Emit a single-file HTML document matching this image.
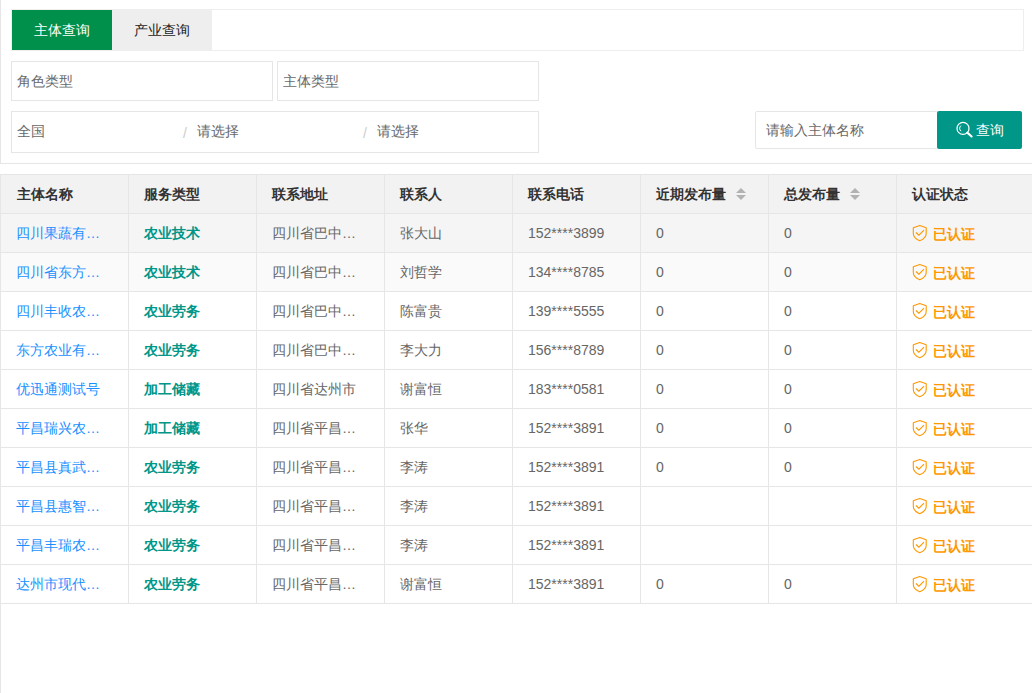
<!DOCTYPE html>
<html><head><meta charset="utf-8">
<style>
*{box-sizing:border-box;margin:0;padding:0}
html,body{width:1032px;height:693px;overflow:hidden;background:#fff}
body{position:relative;font-family:"Liberation Sans",sans-serif;font-size:14px;color:#666}
.abs{position:absolute;white-space:nowrap}
.vl{position:absolute;left:0;top:0;width:1px;height:693px;background:#e6e6e6}
.tabs{position:absolute;left:11px;top:9px;width:1013px;height:42px;border:1px solid #eee}
.tab{position:absolute;top:10px;height:40px;width:100px;line-height:41px;text-align:center;font-size:14px}
.t1{left:12px;background:#00904b;color:#fff}
.t2{left:112px;top:9px;height:42px;line-height:43px;background:#eee;color:#222}
.box{position:absolute;border:1px solid #e6e6e6;background:#fff}
.ph{position:absolute;white-space:nowrap;color:#686868}
.slash{position:absolute;color:#ccc}
.btn{position:absolute;left:937px;top:111px;width:85px;height:38px;background:#009688;border-radius:2px;color:#fff}
.hl{position:absolute;left:0;width:1032px;height:1px;background:#e6e6e6}
.gv{position:absolute;width:1px;background:#e6e6e6}
.th{position:absolute;left:0;width:1032px;height:38px;background:#f2f2f2}
.rowbg{position:absolute;left:0;width:1032px;height:38px}
.cell{position:absolute;width:127px;height:38px;line-height:39px;padding:0 15px;white-space:nowrap;overflow:hidden;text-overflow:ellipsis;color:#666}
.hd{color:#333;font-weight:bold}
.lk{color:#1890ff}
.sv{color:#009688;font-weight:bold}
.ok{color:#ff9800;font-weight:bold;width:200px}
.shield{position:absolute;left:14px;top:10px}
.oktx{position:absolute;left:36px;top:1px}
.sort{position:absolute;width:10px;height:12px}
.sort i{position:absolute;left:0;width:0;height:0;border-left:5px solid transparent;border-right:5px solid transparent}
.sort .up{top:0;border-bottom:5px solid #b2b2b2}
.sort .dn{top:7px;border-top:5px solid #b2b2b2}

</style></head><body>
<div class="tabs"></div>
<div class="tab t1">主体查询</div>
<div class="tab t2">产业查询</div>

<div class="box" style="left:11px;top:61px;width:262px;height:40px"></div>
<div class="ph" style="left:17px;top:73px">角色类型</div>
<div class="box" style="left:277px;top:61px;width:262px;height:40px"></div>
<div class="ph" style="left:283px;top:73px">主体类型</div>

<div class="box" style="left:11px;top:111px;width:528px;height:42px"></div>
<div class="ph" style="left:17px;top:123px">全国</div>
<div class="slash" style="left:183px;top:125px">/</div>
<div class="ph" style="left:197px;top:123px">请选择</div>
<div class="slash" style="left:363px;top:125px">/</div>
<div class="ph" style="left:377px;top:123px">请选择</div>

<div class="box" style="left:755px;top:111px;width:183px;height:38px;border-radius:2px"></div>
<div class="ph" style="left:766px;top:122px">请输入主体名称</div>
<div class="btn"></div>
<svg class="abs" style="left:954px;top:120px" width="20" height="20" viewBox="0 0 20 20"><circle cx="9" cy="8.4" r="6" fill="none" stroke="#fff" stroke-width="1.25"/><path d="M13.3 12.6 L17.6 16.5" stroke="#fff" stroke-width="2.1" stroke-linecap="round"/><path d="M7 5.6 A3.6 3.6 0 0 0 7 11.2" fill="none" stroke="#fff" stroke-width="1"/></svg>
<div class="abs" style="left:976px;top:122px;color:#fff">查询</div>

<div class="hl" style="top:163px"></div>
<div class="hl" style="top:174px"></div>
<div class="th" style="top:175px"></div>
<div class="cell hd" style="left:2px;top:175px">主体名称</div>
<div class="cell hd" style="left:129px;top:175px">服务类型</div>
<div class="cell hd" style="left:257px;top:175px">联系地址</div>
<div class="cell hd" style="left:385px;top:175px">联系人</div>
<div class="cell hd" style="left:513px;top:175px">联系电话</div>
<div class="cell hd" style="left:641px;top:175px">近期发布量</div>
<div class="cell hd" style="left:769px;top:175px">总发布量</div>
<div class="cell hd" style="left:897px;top:175px">认证状态</div>
<div class="sort" style="left:736px;top:188px"><i class="up"></i><i class="dn"></i></div>
<div class="sort" style="left:850px;top:188px"><i class="up"></i><i class="dn"></i></div>
<div class="hl" style="top:213px"></div>
<div class="rowbg" style="top:214px;background:#f5f5f5"></div>
<div class="cell lk" style="left:1px;top:214px">四川果蔬有限公司</div>
<div class="cell sv" style="left:129px;top:214px">农业技术</div>
<div class="cell " style="left:257px;top:214px">四川省巴中市巴州区</div>
<div class="cell " style="left:385px;top:214px">张大山</div>
<div class="cell " style="left:513px;top:214px">152****3899</div>
<div class="cell " style="left:641px;top:214px">0</div>
<div class="cell " style="left:769px;top:214px">0</div>
<div class="cell ok" style="left:897px;top:214px"><svg class="shield" width="18" height="19" viewBox="0 0 18 19"><path d="M8.75 1.4 L15.2 3.7 V9.4 C15.2 12.8 12.6 15 8.75 16.8 C4.9 15 2.3 12.8 2.3 9.4 V3.7 Z" fill="none" stroke="#ff9800" stroke-width="1.1" stroke-linejoin="round"/><path d="M4.9 8.5 L7.9 11.2 L13 6.2" fill="none" stroke="#ff9800" stroke-width="1.1"/></svg><span class="oktx">已认证</span></div>
<div class="hl" style="top:252px"></div>
<div class="rowbg" style="top:253px;background:#fafafa"></div>
<div class="cell lk" style="left:1px;top:253px">四川省东方农业</div>
<div class="cell sv" style="left:129px;top:253px">农业技术</div>
<div class="cell " style="left:257px;top:253px">四川省巴中市巴州区</div>
<div class="cell " style="left:385px;top:253px">刘哲学</div>
<div class="cell " style="left:513px;top:253px">134****8785</div>
<div class="cell " style="left:641px;top:253px">0</div>
<div class="cell " style="left:769px;top:253px">0</div>
<div class="cell ok" style="left:897px;top:253px"><svg class="shield" width="18" height="19" viewBox="0 0 18 19"><path d="M8.75 1.4 L15.2 3.7 V9.4 C15.2 12.8 12.6 15 8.75 16.8 C4.9 15 2.3 12.8 2.3 9.4 V3.7 Z" fill="none" stroke="#ff9800" stroke-width="1.1" stroke-linejoin="round"/><path d="M4.9 8.5 L7.9 11.2 L13 6.2" fill="none" stroke="#ff9800" stroke-width="1.1"/></svg><span class="oktx">已认证</span></div>
<div class="hl" style="top:291px"></div>
<div class="rowbg" style="top:292px;background:#fff"></div>
<div class="cell lk" style="left:1px;top:292px">四川丰收农业合作社</div>
<div class="cell sv" style="left:129px;top:292px">农业劳务</div>
<div class="cell " style="left:257px;top:292px">四川省巴中市巴州区</div>
<div class="cell " style="left:385px;top:292px">陈富贵</div>
<div class="cell " style="left:513px;top:292px">139****5555</div>
<div class="cell " style="left:641px;top:292px">0</div>
<div class="cell " style="left:769px;top:292px">0</div>
<div class="cell ok" style="left:897px;top:292px"><svg class="shield" width="18" height="19" viewBox="0 0 18 19"><path d="M8.75 1.4 L15.2 3.7 V9.4 C15.2 12.8 12.6 15 8.75 16.8 C4.9 15 2.3 12.8 2.3 9.4 V3.7 Z" fill="none" stroke="#ff9800" stroke-width="1.1" stroke-linejoin="round"/><path d="M4.9 8.5 L7.9 11.2 L13 6.2" fill="none" stroke="#ff9800" stroke-width="1.1"/></svg><span class="oktx">已认证</span></div>
<div class="hl" style="top:330px"></div>
<div class="rowbg" style="top:331px;background:#fff"></div>
<div class="cell lk" style="left:1px;top:331px">东方农业有限公司</div>
<div class="cell sv" style="left:129px;top:331px">农业劳务</div>
<div class="cell " style="left:257px;top:331px">四川省巴中市巴州区</div>
<div class="cell " style="left:385px;top:331px">李大力</div>
<div class="cell " style="left:513px;top:331px">156****8789</div>
<div class="cell " style="left:641px;top:331px">0</div>
<div class="cell " style="left:769px;top:331px">0</div>
<div class="cell ok" style="left:897px;top:331px"><svg class="shield" width="18" height="19" viewBox="0 0 18 19"><path d="M8.75 1.4 L15.2 3.7 V9.4 C15.2 12.8 12.6 15 8.75 16.8 C4.9 15 2.3 12.8 2.3 9.4 V3.7 Z" fill="none" stroke="#ff9800" stroke-width="1.1" stroke-linejoin="round"/><path d="M4.9 8.5 L7.9 11.2 L13 6.2" fill="none" stroke="#ff9800" stroke-width="1.1"/></svg><span class="oktx">已认证</span></div>
<div class="hl" style="top:369px"></div>
<div class="rowbg" style="top:370px;background:#fff"></div>
<div class="cell lk" style="left:1px;top:370px">优迅通测试号</div>
<div class="cell sv" style="left:129px;top:370px">加工储藏</div>
<div class="cell " style="left:257px;top:370px">四川省达州市</div>
<div class="cell " style="left:385px;top:370px">谢富恒</div>
<div class="cell " style="left:513px;top:370px">183****0581</div>
<div class="cell " style="left:641px;top:370px">0</div>
<div class="cell " style="left:769px;top:370px">0</div>
<div class="cell ok" style="left:897px;top:370px"><svg class="shield" width="18" height="19" viewBox="0 0 18 19"><path d="M8.75 1.4 L15.2 3.7 V9.4 C15.2 12.8 12.6 15 8.75 16.8 C4.9 15 2.3 12.8 2.3 9.4 V3.7 Z" fill="none" stroke="#ff9800" stroke-width="1.1" stroke-linejoin="round"/><path d="M4.9 8.5 L7.9 11.2 L13 6.2" fill="none" stroke="#ff9800" stroke-width="1.1"/></svg><span class="oktx">已认证</span></div>
<div class="hl" style="top:408px"></div>
<div class="rowbg" style="top:409px;background:#fff"></div>
<div class="cell lk" style="left:1px;top:409px">平昌瑞兴农业有限公司</div>
<div class="cell sv" style="left:129px;top:409px">加工储藏</div>
<div class="cell " style="left:257px;top:409px">四川省平昌县江口镇</div>
<div class="cell " style="left:385px;top:409px">张华</div>
<div class="cell " style="left:513px;top:409px">152****3891</div>
<div class="cell " style="left:641px;top:409px">0</div>
<div class="cell " style="left:769px;top:409px">0</div>
<div class="cell ok" style="left:897px;top:409px"><svg class="shield" width="18" height="19" viewBox="0 0 18 19"><path d="M8.75 1.4 L15.2 3.7 V9.4 C15.2 12.8 12.6 15 8.75 16.8 C4.9 15 2.3 12.8 2.3 9.4 V3.7 Z" fill="none" stroke="#ff9800" stroke-width="1.1" stroke-linejoin="round"/><path d="M4.9 8.5 L7.9 11.2 L13 6.2" fill="none" stroke="#ff9800" stroke-width="1.1"/></svg><span class="oktx">已认证</span></div>
<div class="hl" style="top:447px"></div>
<div class="rowbg" style="top:448px;background:#fff"></div>
<div class="cell lk" style="left:1px;top:448px">平昌县真武农业</div>
<div class="cell sv" style="left:129px;top:448px">农业劳务</div>
<div class="cell " style="left:257px;top:448px">四川省平昌县江口镇</div>
<div class="cell " style="left:385px;top:448px">李涛</div>
<div class="cell " style="left:513px;top:448px">152****3891</div>
<div class="cell " style="left:641px;top:448px">0</div>
<div class="cell " style="left:769px;top:448px">0</div>
<div class="cell ok" style="left:897px;top:448px"><svg class="shield" width="18" height="19" viewBox="0 0 18 19"><path d="M8.75 1.4 L15.2 3.7 V9.4 C15.2 12.8 12.6 15 8.75 16.8 C4.9 15 2.3 12.8 2.3 9.4 V3.7 Z" fill="none" stroke="#ff9800" stroke-width="1.1" stroke-linejoin="round"/><path d="M4.9 8.5 L7.9 11.2 L13 6.2" fill="none" stroke="#ff9800" stroke-width="1.1"/></svg><span class="oktx">已认证</span></div>
<div class="hl" style="top:486px"></div>
<div class="rowbg" style="top:487px;background:#fff"></div>
<div class="cell lk" style="left:1px;top:487px">平昌县惠智农业</div>
<div class="cell sv" style="left:129px;top:487px">农业劳务</div>
<div class="cell " style="left:257px;top:487px">四川省平昌县江口镇</div>
<div class="cell " style="left:385px;top:487px">李涛</div>
<div class="cell " style="left:513px;top:487px">152****3891</div>
<div class="cell " style="left:641px;top:487px"></div>
<div class="cell " style="left:769px;top:487px"></div>
<div class="cell ok" style="left:897px;top:487px"><svg class="shield" width="18" height="19" viewBox="0 0 18 19"><path d="M8.75 1.4 L15.2 3.7 V9.4 C15.2 12.8 12.6 15 8.75 16.8 C4.9 15 2.3 12.8 2.3 9.4 V3.7 Z" fill="none" stroke="#ff9800" stroke-width="1.1" stroke-linejoin="round"/><path d="M4.9 8.5 L7.9 11.2 L13 6.2" fill="none" stroke="#ff9800" stroke-width="1.1"/></svg><span class="oktx">已认证</span></div>
<div class="hl" style="top:525px"></div>
<div class="rowbg" style="top:526px;background:#fff"></div>
<div class="cell lk" style="left:1px;top:526px">平昌丰瑞农业有限公司</div>
<div class="cell sv" style="left:129px;top:526px">农业劳务</div>
<div class="cell " style="left:257px;top:526px">四川省平昌县江口镇</div>
<div class="cell " style="left:385px;top:526px">李涛</div>
<div class="cell " style="left:513px;top:526px">152****3891</div>
<div class="cell " style="left:641px;top:526px"></div>
<div class="cell " style="left:769px;top:526px"></div>
<div class="cell ok" style="left:897px;top:526px"><svg class="shield" width="18" height="19" viewBox="0 0 18 19"><path d="M8.75 1.4 L15.2 3.7 V9.4 C15.2 12.8 12.6 15 8.75 16.8 C4.9 15 2.3 12.8 2.3 9.4 V3.7 Z" fill="none" stroke="#ff9800" stroke-width="1.1" stroke-linejoin="round"/><path d="M4.9 8.5 L7.9 11.2 L13 6.2" fill="none" stroke="#ff9800" stroke-width="1.1"/></svg><span class="oktx">已认证</span></div>
<div class="hl" style="top:564px"></div>
<div class="rowbg" style="top:565px;background:#fff"></div>
<div class="cell lk" style="left:1px;top:565px">达州市现代农业</div>
<div class="cell sv" style="left:129px;top:565px">农业劳务</div>
<div class="cell " style="left:257px;top:565px">四川省平昌县江口镇</div>
<div class="cell " style="left:385px;top:565px">谢富恒</div>
<div class="cell " style="left:513px;top:565px">152****3891</div>
<div class="cell " style="left:641px;top:565px">0</div>
<div class="cell " style="left:769px;top:565px">0</div>
<div class="cell ok" style="left:897px;top:565px"><svg class="shield" width="18" height="19" viewBox="0 0 18 19"><path d="M8.75 1.4 L15.2 3.7 V9.4 C15.2 12.8 12.6 15 8.75 16.8 C4.9 15 2.3 12.8 2.3 9.4 V3.7 Z" fill="none" stroke="#ff9800" stroke-width="1.1" stroke-linejoin="round"/><path d="M4.9 8.5 L7.9 11.2 L13 6.2" fill="none" stroke="#ff9800" stroke-width="1.1"/></svg><span class="oktx">已认证</span></div>
<div class="hl" style="top:603px"></div>
<div class="gv" style="left:128px;top:174px;height:430px"></div>
<div class="gv" style="left:256px;top:174px;height:430px"></div>
<div class="gv" style="left:384px;top:174px;height:430px"></div>
<div class="gv" style="left:512px;top:174px;height:430px"></div>
<div class="gv" style="left:640px;top:174px;height:430px"></div>
<div class="gv" style="left:768px;top:174px;height:430px"></div>
<div class="gv" style="left:896px;top:174px;height:430px"></div>
<div class="vl" style="height:164px"></div><div class="vl" style="top:174px;height:519px"></div>
</body></html>
